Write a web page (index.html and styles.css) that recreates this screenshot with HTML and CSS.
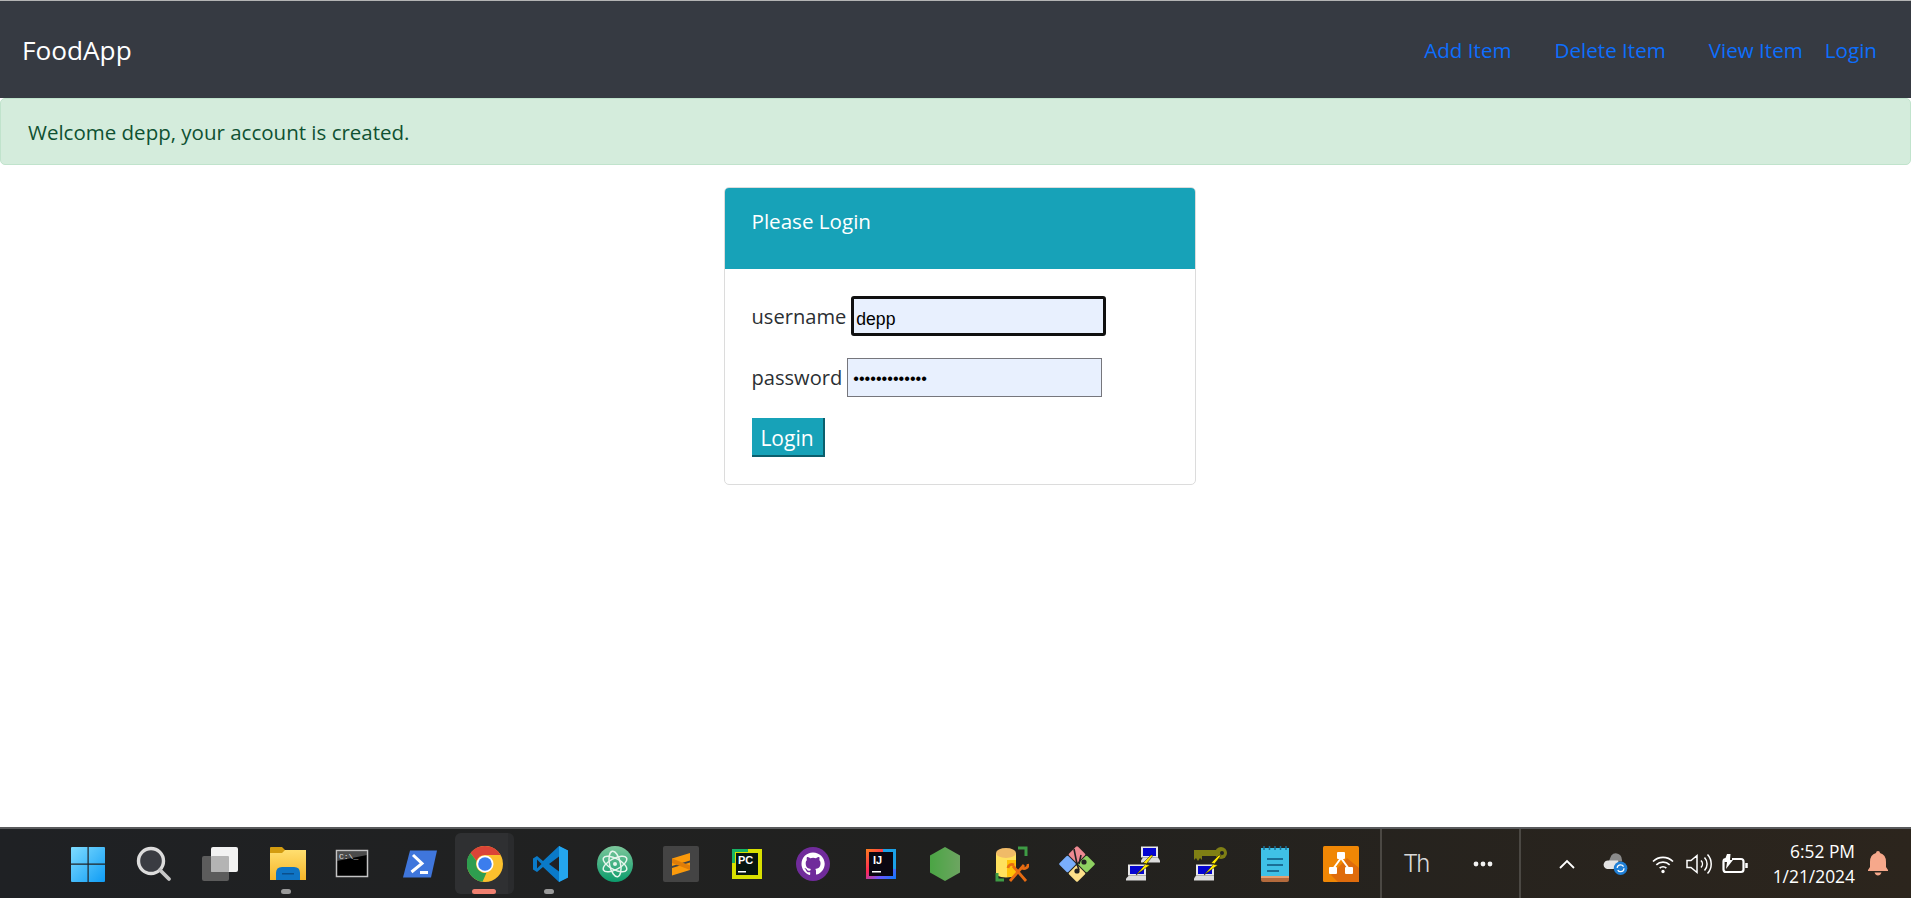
FILE: index.html
```html
<!DOCTYPE html>
<html lang="en">
<head>
    <meta charset="UTF-8">
    <meta name="viewport" content="width=device-width, initial-scale=1.0">
    <title>FoodApp</title>
    <link rel="stylesheet" href="styles.css">
</head>
<body>
    <nav class="navbar">
        <a class="brand" href="#">FoodApp</a>
        <ul class="nav-links">
            <li class="link-add"><a href="#">Add Item</a></li>
            <li class="link-delete"><a href="#">Delete Item</a></li>
            <li class="link-view"><a href="#">View Item</a></li>
            <li><a href="#">Login</a></li>
        </ul>
    </nav>

    <div class="alert">Welcome depp, your account is created.</div>

    <main class="content">
        <div class="card">
            <div class="card-header">Please Login</div>
            <form class="card-body">
                <div class="field">
                    <label for="username">username</label>
                    <input class="input input-focus" type="text" id="username" value="depp">
                </div>
                <div class="field">
                    <label for="password">password</label>
                    <input class="input input-password" type="password" id="password" value="1234567890123">
                </div>
                <button class="login-btn" type="button">Login</button>
            </form>
        </div>
    </main>

    <footer class="taskbar">
        <div class="task-icons">
            <!-- windows -->
            <div class="task-icon"><svg width="36" height="36" viewBox="0 0 36 36">
                <defs><linearGradient id="win" x1="0" y1="0" x2="1" y2="1"><stop offset="0" stop-color="#7fdcff"/><stop offset="1" stop-color="#0f9cf5"/></linearGradient></defs>
                <path fill="url(#win)" d="M2 1h15.500v16.500H1V2q0-1 1-1zM18.700 1H34q1 0 1 1v15.500H18.700zM1 18.700h16.500V36H2q-1 0-1-1zM18.700 18.700H35V35q0 1-1 1H18.700z"/>
            </svg></div>
            <!-- search -->
            <div class="task-icon"><svg width="36" height="36" viewBox="0 0 36 36">
                <circle cx="15" cy="15" r="12.500" fill="#3a3c42" stroke="#dcdcdc" stroke-width="3.400"/>
                <path d="M24 24l9 9" stroke="#c8c8c8" stroke-width="3.800" stroke-linecap="round"/>
            </svg></div>
            <!-- task view -->
            <div class="task-icon"><svg width="36" height="36" viewBox="0 0 36 36">
                <rect x="0" y="10" width="27" height="25" rx="2" fill="#5c5c5c"/>
                <rect x="9" y="1" width="27" height="25" rx="2" fill="#f2f2f2"/>
                <rect x="9" y="10" width="18" height="16" rx="1" fill="#b4b4b4"/>
            </svg></div>
            <!-- explorer -->
            <div class="task-icon has-dot icon-shift"><svg width="36" height="36" viewBox="0 0 36 36">
                <path fill="#d39c10" d="M0 2q0-1 1-1h11l4 4v3H0z"/>
                <defs><linearGradient id="folder" x1="0" y1="0" x2="0" y2="1"><stop offset="0" stop-color="#ffdf70"/><stop offset="1" stop-color="#f6b528"/></linearGradient></defs>
                <path fill="url(#folder)" d="M0 7h12l3-3h21v30H0z"/>
                <path fill="#0f74c4" d="M6 34v-7q0-6 6-6h12q6 0 6 6v7z"/>
                <path fill="#0a4f8c" d="M12 27h12v1.500H12z"/>
            </svg></div>
            <!-- cmd -->
            <div class="task-icon"><svg width="36" height="36" viewBox="0 0 36 36">
                <rect x="2.500" y="4.500" width="31" height="26" fill="#000" stroke="#c4c4c4" stroke-width="1.500"/>
                <path fill="#7d7d7d" d="M3 5h30v4L3 15z" opacity=".6"/>
                <text class="cmd-text" x="5" y="13">C:\_</text>
            </svg></div>
            <!-- powershell -->
            <div class="task-icon icon-shift"><svg width="36" height="36" viewBox="0 0 36 36">
                <path fill="#3f76dc" d="M8 4.500h27L29 31.500H1z"/>
                <path d="M11 9l9 8.500-10.500 8.500M18 26.500h8" fill="none" stroke="#fff" stroke-width="3"/>
            </svg></div>
            <!-- chrome -->
            <div class="task-icon task-active"><svg width="36" height="36" viewBox="0 0 36 36">
                <circle cx="18" cy="18" r="18" fill="#fbc02d"/>
                <path fill="#db4437" d="M18 0a18 18 0 0 1 15.600 9H18a9 9 0 0 0-8.500 6L3.500 7A18 18 0 0 1 18 0z"/>
                <path fill="#2e9e4f" d="M3.500 7l6 8a9 9 0 0 0 10 11.800L15.500 35.800A18 18 0 0 1 3.500 7z"/>
                <circle cx="18" cy="18" r="8.500" fill="#fff"/>
                <circle cx="18" cy="18" r="6.800" fill="#3b7ded"/>
            </svg></div>
            <!-- vscode -->
            <div class="task-icon has-dot icon-shift"><svg width="36" height="36" viewBox="0 0 36 36">
                <path fill="#0a7ac8" d="M26 0l9 4.500v27L26 36 10 21l-6 5-4-2.500V12.500L4 10l6 5z"/>
                <path fill="#24a6ee" d="M26 0l9 4.500v27L26 36z"/>
                <path fill="#202124" d="M26 10.500L16 18l10 7.500z"/>
                <path fill="#202124" d="M4 13.500v9l4.500-4.500z"/>
            </svg></div>
            <!-- atom -->
            <div class="task-icon"><svg width="36" height="36" viewBox="0 0 36 36">
                <defs><linearGradient id="atom" x1="0" y1="0" x2="0" y2="1"><stop offset="0" stop-color="#7cc79b"/><stop offset="1" stop-color="#0c9c6c"/></linearGradient></defs>
                <circle cx="18" cy="18" r="18" fill="url(#atom)"/>
                <g fill="none" stroke="#e6f5ec" stroke-width="1.500">
                    <ellipse cx="18" cy="18" rx="5.500" ry="13" transform="rotate(-12 18 18)"/>
                    <ellipse cx="18" cy="18" rx="5.500" ry="13" transform="rotate(62 18 18)"/>
                    <ellipse cx="18" cy="18" rx="5.500" ry="13" transform="rotate(118 18 18)"/>
                </g>
                <circle cx="18" cy="18" r="2" fill="#e6f5ec"/>
            </svg></div>
            <!-- sublime -->
            <div class="task-icon"><svg width="36" height="36" viewBox="0 0 36 36">
                <rect width="36" height="36" rx="2" fill="#444"/>
                <path fill="#fb9a0b" d="M27 7v7.500L9 20v-7.500zM27 16.500V24L9 29.500V22z"/>
                <path fill="#e07d08" d="M9 12.500l18 7v4.500L9 17z"/>
            </svg></div>
            <!-- pycharm -->
            <div class="task-icon"><svg width="36" height="36" viewBox="0 0 36 36">
                <rect x="5" y="5" width="26" height="26" fill="#06150f" stroke="#d8e000" stroke-width="4"/>
                <path d="M3 3h16v3H6v11H3z" fill="#16b364"/>
                <text class="jb-text" x="9" y="18">PC</text>
                <path fill="#fff" d="M9 25h8v1.500H9z"/>
            </svg></div>
            <!-- github -->
            <div class="task-icon"><svg width="36" height="36" viewBox="0 0 36 36">
                <circle cx="18" cy="18" r="17" fill="#702b9b"/>
                <path fill="#fff" d="M18 6.500c-6.500 0-11.500 5-11.500 11.500 0 5 3.300 9.400 7.900 10.900.6.100.8-.3.800-.6v-2.100c-3.200.7-3.900-1.500-3.900-1.500-.5-1.300-1.300-1.700-1.300-1.700-1-.7.100-.7.100-.7 1.200.1 1.800 1.200 1.800 1.200 1 1.800 2.700 1.300 3.400 1 .1-.8.400-1.300.7-1.600-2.600-.3-5.300-1.300-5.300-5.700 0-1.300.5-2.300 1.200-3.100-.1-.3-.5-1.500.1-3.100 0 0 1-.3 3.200 1.200a11 11 0 0 1 5.800 0c2.200-1.500 3.200-1.200 3.200-1.200.6 1.600.2 2.800.1 3.100.7.800 1.200 1.800 1.200 3.100 0 4.400-2.700 5.400-5.300 5.700.4.400.8 1 .8 2.100v3c0 .3.200.7.800.6 4.600-1.500 7.900-5.900 7.900-10.900C29.500 11.500 24.500 6.500 18 6.500z"/>
            </svg></div>
            <!-- intellij -->
            <div class="task-icon icon-shift"><svg width="36" height="36" viewBox="0 0 36 36">
                <defs><linearGradient id="ij" x1="0" y1="0" x2="1" y2="1"><stop offset="0" stop-color="#fc801d"/><stop offset=".4" stop-color="#fe2857"/><stop offset=".7" stop-color="#6b57ff"/><stop offset="1" stop-color="#087cfa"/></linearGradient></defs>
                <rect x="3" y="3" width="30" height="30" fill="url(#ij)"/>
                <path fill="#1ba1e8" d="M20 3h13v20h-3V6H20z"/>
                <rect x="6" y="6" width="24" height="24" fill="#0a0611"/>
                <text class="jb-text" x="10" y="18">IJ</text>
                <path fill="#fff" d="M9 25h9v1.500H9z"/>
            </svg></div>
            <!-- node -->
            <div class="task-icon"><svg width="36" height="36" viewBox="0 0 36 36">
                <defs><linearGradient id="node" x1="0" y1="0" x2="1" y2="0"><stop offset="0" stop-color="#4aa544"/><stop offset="1" stop-color="#6da561"/></linearGradient></defs>
                <path fill="url(#node)" d="M18 1l15 8.500v17L18 35 3 26.500v-17z"/>
            </svg></div>
            <!-- db tool -->
            <div class="task-icon"><svg width="36" height="36" viewBox="0 0 36 36">
                <path fill="#ffe15e" d="M3 7h20v22q-10 5-20 0z"/>
                <path fill="#ffc107" d="M14 14h9v15q-4 2-9 2z"/>
                <ellipse cx="13" cy="7" rx="10" ry="5" fill="#f0bb68"/>
                <path d="M25 2h8v8M11 34H4v-7" fill="none" stroke="#3e9c45" stroke-width="3"/>
                <g stroke="#e86c12" stroke-width="2.800" fill="none">
                    <path d="M17 35l14-16M33 35L20 20"/>
                    <path d="M15 22a4 4 0 0 1 6-3M35 18a4 4 0 0 1-6 4"/>
                </g>
            </svg></div>
            <!-- sourcetree / git -->
            <div class="task-icon"><svg width="36" height="36" viewBox="0 0 36 36">
                <g transform="rotate(45 18 18)">
                    <rect x="5" y="5" width="12.500" height="12.500" rx="1.500" fill="#ee8a92"/>
                    <rect x="18.500" y="5" width="12.500" height="12.500" rx="1.500" fill="#8fd162"/>
                    <rect x="18.500" y="18.500" width="12.500" height="12.500" rx="1.500" fill="#fde08a"/>
                    <rect x="5" y="18.500" width="12.500" height="12.500" rx="1.500" fill="#7aaefb"/>
                </g>
                <path d="M15 3l3 15 2 6M22 9l-2 9" stroke="#222" stroke-width="1.600" fill="none"/>
                <circle cx="18" cy="25" r="2.600" fill="#222"/>
                <circle cx="25" cy="16" r="2.600" fill="#222"/>
            </svg></div>
            <!-- putty -->
            <div class="task-icon"><svg width="36" height="36" viewBox="0 0 36 36">
                <rect x="16" y="0.500" width="17" height="11" fill="#e8e8e8"/><rect x="18" y="2" width="13" height="8" fill="#0404d0"/><path fill="#dcdcdc" d="M18 11.500h15l2 3v2H16v-2z"/>
                <rect x="3" y="18.500" width="18" height="11" fill="#e8e8e8"/><rect x="5" y="20" width="14" height="8" fill="#0404d0"/><path fill="#dcdcdc" d="M4 29.500h17v5H1v-2z"/>
                <path fill="#ffe800" stroke="#111" stroke-width=".5" d="M26 9l-8 8 3 .5L11 29l14-10-4-.5 7-9z"/>
            </svg></div>
            <!-- puttygen -->
            <div class="task-icon"><svg width="36" height="36" viewBox="0 0 36 36">
                <circle cx="30" cy="7" r="6" fill="#7f7f14"/><circle cx="31" cy="7" r="2" fill="#222"/>
                <path fill="#7f7f14" d="M3 4h24v6H11v4l-2-2-2 3-2-3-2 2z"/>
                <rect x="5" y="18.500" width="18" height="11" fill="#e8e8e8"/><rect x="7" y="20" width="14" height="8" fill="#0404d0"/><path fill="#dcdcdc" d="M5 29.500h18v5H3v-2z"/>
                <path fill="#ffe800" stroke="#111" stroke-width=".5" d="M28 9l-8 8 3 .5L13 29l14-10-4-.5 7-9z"/>
            </svg></div>
            <!-- notepad -->
            <div class="task-icon"><svg width="36" height="36" viewBox="0 0 36 36">
                <path fill="#3fc1e6" d="M4 2h28v30H4z"/>
                <path fill="#b46a3c" d="M4 30h28v4q0 2-2 2H6q-2 0-2-2z"/>
                <path fill="#e4a070" d="M4 30h28v2H4z"/>
                <path fill="#1a6f96" d="M10 12h16v2H10zM10 18h16v2H10zM10 24h12v2H10z"/>
                <path stroke="#1a6f96" stroke-width="1.500" d="M7 0v4M12.500 0v4M18 0v4M23.500 0v4M29 0v4"/>
            </svg></div>
            <!-- drawio -->
            <div class="task-icon"><svg width="36" height="36" viewBox="0 0 36 36">
                <rect width="36" height="36" rx="1.500" fill="#f08705"/>
                <path fill="#df6c0c" d="M36 22v14H15L8 29l6-6 10-11z"/>
                <path d="M18 12L10 23M18 12l8 11" stroke="#fff" stroke-width="2"/>
                <rect x="14" y="6" width="8" height="7" rx="1" fill="#fff"/>
                <rect x="6" y="21" width="8" height="7" rx="1" fill="#fff"/>
                <rect x="22" y="21" width="8" height="7" rx="1" fill="#fff"/>
            </svg></div>
        </div>

        <div class="task-overflow">
            <span class="font-tile">Th</span>
            <svg width="20" height="6" viewBox="0 0 20 6" fill="#f2f2f2"><circle cx="3" cy="3" r="2.400"/><circle cx="10" cy="3" r="2.400"/><circle cx="17" cy="3" r="2.400"/></svg>
        </div>

        <div class="tray">
            <div class="tray-wide"><svg width="16" height="10" viewBox="0 0 16 10"><path d="M1 9l7-7 7 7" fill="none" stroke="#fff" stroke-width="1.800"/></svg></div>
            <div class="tray-wide"><svg width="25" height="22" viewBox="0 0 28 26">
                <path fill="#8a8a8a" d="M9 3a7 7 0 0 1 12 2l1 5H6z"/>
                <path fill="#e3e3e3" d="M2 18a5 5 0 0 1 3-9h12l3 10H4z"/>
                <circle cx="20" cy="18" r="8" fill="#1f7fd6"/>
                <circle cx="20" cy="18" r="4" fill="none" stroke="#fff" stroke-width="1.500" stroke-dasharray="10 2.500"/>
            </svg></div>
            <div class="tray-icon tray-wifi"><svg width="26" height="20" viewBox="0 0 26 24" fill="none" stroke="#fff" stroke-width="2">
                <path d="M1 9a17 17 0 0 1 24 0M5 13a11.500 11.500 0 0 1 16 0M9 17a5.500 5.500 0 0 1 8 0"/>
                <circle cx="13" cy="21" r="2" fill="#fff" stroke="none"/>
            </svg></div>
            <div class="tray-icon"><svg width="26" height="22" viewBox="0 0 26 22" fill="none" stroke="#fff" stroke-width="1.500">
                <path d="M1 7.500h4l6-5v17l-6-5H1zM15 7.500a5 5 0 0 1 0 7M18.500 4.500a9.500 9.500 0 0 1 0 13M21.500 1.500a14 14 0 0 1 0 19"/>
            </svg></div>
            <div class="tray-icon"><svg width="26" height="20" viewBox="0 0 26 20" fill="none" stroke="#fff" stroke-width="2.200">
                <path d="M10 5h9q2.500 0 2.500 2.500v8q0 2.500-2.500 2.500H4q-2.500 0-2.500-2.500v-8Q1.500 5 4 5"/>
                <path d="M24.500 9v5" stroke-width="2.500"/>
                <path fill="#fff" stroke="none" d="M5 0h3.500L8 6h3L4 15l1-7H2z"/>
            </svg></div>
            <div class="clock"><span>6:52 PM</span><span>1/21/2024</span></div>
            <svg class="bell" width="20" height="25" viewBox="0 0 20 25" fill="#f6a88b">
                <path d="M10 0q2 0 2 2 6 1.500 6 9v5l2 3v1H0v-1l2-3v-5q0-7.500 6-9 0-2 2-2zM6.500 21.500h7q-1 3-3.500 3t-3.500-3z"/>
            </svg>
        </div>
    </footer>
</body>
</html>
```

FILE: styles.css
```css
* {
    box-sizing: border-box;
}
body {
    font-family: 'Open Sans', 'Noto Sans', sans-serif;
    background-color: #fff;
    color: #212529;
    margin: 0;
    height: 100vh;
    display: flex;
    flex-direction: column;
    overflow: hidden;
}
a {
    text-decoration: none;
}
.navbar {
    height: 98px;
    flex-shrink: 0;
    background-color: #363a42;
    border-top: 1px solid #b4b4b4;
    display: flex;
    align-items: center;
    justify-content: space-between;
    padding: 0 34px 0 22px;
}
.brand {
    color: #fff;
    font-size: 26.200px;
}
.nav-links {
    list-style: none;
    margin: 0;
    padding: 0;
    display: flex;
    font-size: 20.600px;
}
.nav-links a {
    color: #0d6efd;
}
.link-add, .link-delete {
    margin-right: 43px;
}
.link-view {
    margin-right: 22px;
}
.alert {
    height: 67px;
    flex-shrink: 0;
    background-color: #d4ecdc;
    border: 1px solid #c0e3cc;
    border-radius: 5px;
    color: #0f5132;
    font-size: 20.500px;
    display: flex;
    align-items: center;
    padding-left: 27px;
}
.content {
    flex: 1;
    display: flex;
    justify-content: center;
    align-items: flex-start;
    padding: 22px 0 0 0;
}
.card {
    width: 472px;
    margin-left: 8px;
    border: 1px solid #dcdcdc;
    border-radius: 5px;
    overflow: hidden;
}
.card-header {
    height: 81px;
    background-color: #17a2b8;
    color: #fff;
    font-size: 20.600px;
    line-height: 29px;
    padding: 19px 27px 0;
}
.card-body {
    padding: 27px 27px 27px;
}
.field {
    display: flex;
    align-items: center;
    gap: 5px;
    height: 40px;
    margin-bottom: 21px;
    font-size: 20.100px;
    color: #2b2f33;
}
.input {
    width: 255px;
    height: 40px;
    border: 1px solid #76767c;
    background-color: #e8f0fe;
    font-family: 'Liberation Sans', sans-serif;
    font-size: 17.600px;
    padding: 3px 5px 0;
    color: #000;
    outline: none;
}
.input-focus {
    border: 3px solid #101010;
    border-radius: 3px;
    padding: 6px 2px 0;
}
.input-password {
    height: 39px;
    font-size: 16.200px;
}
.login-btn {
    display: block;
    width: 73px;
    height: 39px;
    background-color: #17a2b8;
    color: #fff;
    font-family: inherit;
    font-size: 21px;
    border: none;
    border-right: 2px solid #0b5f6d;
    border-bottom: 2px solid #0b5f6d;
    padding: 2px 0 0;
}
.taskbar {
    height: 71px;
    flex-shrink: 0;
    border-top: 2px solid #595a5c;
    background: linear-gradient(90deg, #1f2124, #21211f 50%, #2c251d);
    display: flex;
    align-items: stretch;
    color: #fff;
}
.task-icons {
    display: flex;
    padding-left: 55px;
    margin-right: 6px;
}
.task-icon {
    width: 66px;
    display: flex;
    align-items: center;
    justify-content: center;
    position: relative;
}
.icon-shift {
    padding-left: 3px;
}
.has-dot::after {
    content: '';
    position: absolute;
    left: 28px;
    bottom: 4px;
    width: 10px;
    height: 5px;
    border-radius: 3px;
    background-color: #9a9a9a;
}
.task-active {
    background: linear-gradient(90deg, #2f3032 53px, #2a2b2d 53px);
    border-radius: 6px;
    width: 59px;
    margin: 4px 2px 4px 4px;
}
.task-active::after {
    content: '';
    position: absolute;
    left: 17px;
    bottom: 0;
    width: 24px;
    height: 5px;
    border-radius: 3px;
    background-color: #f08070;
}
.task-overflow {
    width: 141px;
    border-left: 2px solid #4b4843;
    border-right: 2px solid #4b4843;
    display: flex;
    align-items: center;
    padding-left: 21px;
    gap: 46px;
}
.font-tile {
    font-family: 'Inter', sans-serif;
    font-weight: 300;
    font-size: 24px;
    letter-spacing: -2px;
    color: #d8d8d8;
    width: 24px;
}
.cmd-text {
    font-family: 'Liberation Mono', monospace;
    font-size: 8px;
    fill: #e0e0e0;
}
.jb-text {
    font-family: 'Liberation Sans', sans-serif;
    font-weight: 700;
    font-size: 11px;
    fill: #fff;
}
.tray {
    flex: 1;
    display: flex;
    align-items: center;
    padding-left: 22px;
    padding-right: 23px;
}
.tray-wide {
    width: 48px;
    display: flex;
    justify-content: center;
}
.tray-icon {
    width: 36px;
    display: flex;
    justify-content: center;
}
.tray-wifi {
    margin-left: 6px;
}
.clock {
    margin-left: auto;
    display: flex;
    flex-direction: column;
    align-items: flex-end;
    font-size: 17.400px;
    line-height: 25px;
    margin-right: 13px;
}
```
